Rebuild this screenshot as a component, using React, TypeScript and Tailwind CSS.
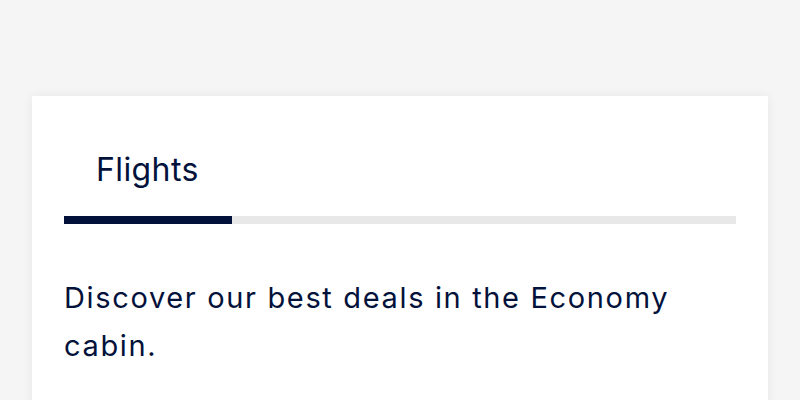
export default function App() {
  return (
    <div className="h-[400px] overflow-hidden bg-[#f5f5f5] px-8 pt-24 font-['Inter',sans-serif]">
      <div className="h-[400px] bg-white px-8 pt-[54px] shadow-[0_0_12px_rgba(0,0,0,0.06)]">
        <div className="px-8 text-[32px] leading-[40px] tracking-[0.4px] text-[#03123b]">Flights</div>
        <div className="mt-[26px] flex h-2 bg-[#e8e8e8]">
          <div className="w-[168px] bg-[#02113a]" />
        </div>
        <p className="mt-[50px] text-[29px] leading-[48px] tracking-[1.65px] text-[#03123b]">
          Discover our best deals in the Economy cabin.
        </p>
      </div>
    </div>
  );
}
